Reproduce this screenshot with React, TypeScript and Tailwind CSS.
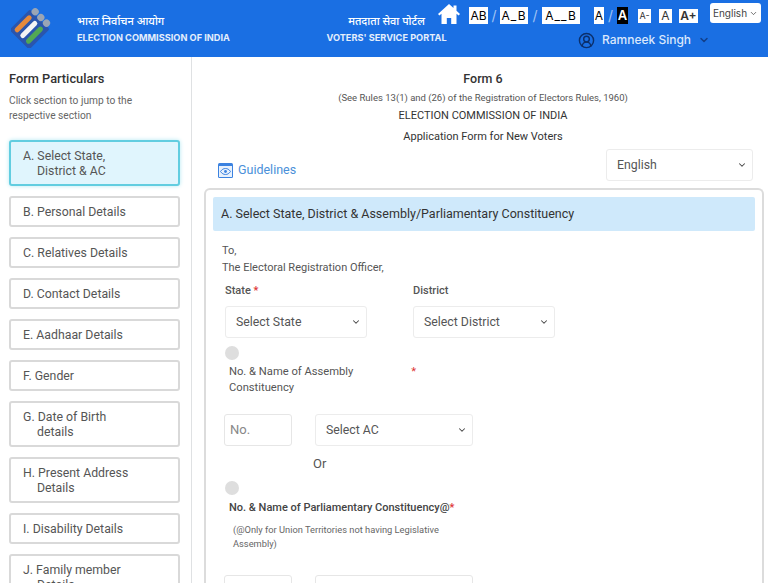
import { ChevronDown, CircleUserRound } from "lucide-react";

const SECTIONS = [
  { id: "A.", lines: ["Select State,", "District & AC"], active: true },
  { id: "B.", lines: ["Personal Details"] },
  { id: "C.", lines: ["Relatives Details"] },
  { id: "D.", lines: ["Contact Details"] },
  { id: "E.", lines: ["Aadhaar Details"] },
  { id: "F.", lines: ["Gender"] },
  { id: "G.", lines: ["Date of Birth", "details"] },
  { id: "H.", lines: ["Present Address", "Details"] },
  { id: "I.", lines: ["Disability Details"] },
  { id: "J.", lines: ["Family member", "Details"] },
];

function Logo() {
  return (
    <svg width="42" height="42" viewBox="0 0 42 42" className="shrink-0">
      <g transform="rotate(-45 21 21)">
        <rect x="3" y="7" width="29" height="28" rx="2" fill="#2a55ad" />
        <rect x="6" y="10" width="22" height="5" rx="2.500" fill="#e58a3c" />
        <rect x="6" y="18" width="22" height="5" rx="2.500" fill="#f4f4f4" />
        <rect x="6" y="26" width="22" height="5" rx="2.500" fill="#52a853" />
        <circle cx="34" cy="12.500" r="3.600" fill="#9aa5b5" />
        <circle cx="34" cy="20.500" r="3.600" fill="#9aa5b5" />
        <circle cx="34" cy="28.500" r="3.600" fill="#9aa5b5" />
      </g>
    </svg>
  );
}

function A11yBox({ label, className = "" }: { label: string; className?: string }) {
  return (
    <span className={`flex h-[17px] items-center justify-center whitespace-nowrap bg-white text-[12px] leading-none text-black ${className}`}>
      {label}
    </span>
  );
}

function Slash({ className = "w-[12px]" }: { className?: string }) {
  return <span className={`text-center text-[14px] leading-none ${className}`}>/</span>;
}

function Header() {
  return (
    <header className="flex h-[57px] shrink-0 bg-[#1a6fe3] font-['Inter',sans-serif] text-white">
      <div className="ml-[11px] mt-[6px]">
        <Logo />
      </div>
      <div className="ml-[24px] mt-[13px] w-[249px]">
        <div className="font-['Noto_Sans',sans-serif] text-[11px] leading-[15px] font-medium">भारत निर्वाचन आयोग</div>
        <div className="mt-[3px] text-[9.200px] leading-[14px] font-bold text-[#e4eefc]">ELECTION COMMISSION OF INDIA</div>
      </div>
      <div className="mt-[13px] w-[121px] text-center">
        <div className="font-['Noto_Sans',sans-serif] text-[11px] leading-[15px] font-medium">मतदाता सेवा पोर्टल</div>
        <div className="mt-[3px] whitespace-nowrap text-[9.200px] leading-[14px] font-bold text-[#e4eefc]">VOTERS' SERVICE PORTAL</div>
      </div>
      <div className="-ml-[9px] flex flex-col">
        <div className="mt-[3px] flex items-start">
          <svg width="22" height="20" viewBox="0 0 22 20" fill="white" className="mt-[1px]">
            <path d="M11 0 0 10l1.400 1.500L3.500 9.700V20h5.300v-6h4.400v6h5.300V9.700l2.100 1.800L22 10l-3.500-3.200V1.500h-3v2.600z" />
          </svg>
          <div className="ml-[9px] mt-[4px] flex items-center text-white/60">
            <A11yBox label="AB" className="w-[19px]" />
            <Slash />
            <A11yBox label="A_B" className="w-[28px] tracking-[1px]" />
            <Slash className="w-[14px]" />
            <A11yBox label="A__B" className="w-[38px] tracking-[1px]" />
            <A11yBox label="A" className="ml-[14px] w-[10px]" />
            <Slash className="w-[13px]" />
            <span className="flex h-[17px] w-[11px] items-center justify-center bg-black text-[13px] leading-none font-semibold text-white">A</span>
            <span className="ml-[10px] flex h-[14px] w-[13px] items-center justify-center bg-white text-[9px] text-[#333]">A-</span>
            <span className="ml-[8px] flex h-[14px] w-[13px] items-center justify-center bg-white text-[12px] text-[#333]">A</span>
            <span className="ml-[7px] flex h-[14px] w-[19px] items-center justify-center bg-white text-[12px] font-semibold text-[#333]">A+</span>
          </div>
          <div className="ml-[12px] flex h-[20px] w-[51px] items-center justify-center gap-[2px] rounded-[3px] bg-white text-[10px] text-[#444]">
            English
            <ChevronDown size={9} strokeWidth={2} />
          </div>
        </div>
        <div className="ml-[140px] mt-[7px] flex items-center">
          <CircleUserRound size={17} strokeWidth={2} className="text-[#0b2f6b]" />
          <span className="ml-[7px] text-[12px] font-medium text-[#dbe8fc]">Ramneek Singh</span>
          <ChevronDown size={12} strokeWidth={3} className="ml-[7px] text-[#123f8a]" />
        </div>
      </div>
    </header>
  );
}

function Sidebar() {
  return (
    <aside className="w-[192px] shrink-0 border-r border-[#dfe1e3] pl-[9px] pr-[11px]">
      <h2 className="mt-[14px] text-[12.800px] leading-[16px] font-medium text-[#333]">Form Particulars</h2>
      <p className="mt-[6px] text-[10.200px] leading-[15px] text-[#666]">
        Click section to jump to the
        <br />
        respective section
      </p>
      <div className="mt-[17px] flex flex-col gap-[10px]">
        {SECTIONS.map((s) => (
          <div
            key={s.id}
            className={`shrink-0 rounded-[3px] border-2 pb-[5px] pl-[12px] pt-[7px] text-[12.300px] leading-[15px] text-[#555] ${
              s.active
                ? "border-[#62cde0] bg-[#e0f5fd] shadow-[0_0_4px_#b5e8f2]"
                : "border-[#d9d9d9] bg-white"
            }`}
          >
            <span className="block">{s.id} {s.lines[0]}</span>
            {s.lines[1] && <span className="block pl-[14px]">{s.lines[1]}</span>}
          </div>
        ))}
      </div>
    </aside>
  );
}

function SelectBox({ label, className = "" }: { label: string; className?: string }) {
  return (
    <div className={`flex h-[32px] items-center justify-between rounded-[3px] border border-[#ececec] bg-white pl-[10px] pr-[5px] text-[12.300px] text-[#555] ${className}`}>
      {label}
      <ChevronDown size={10} strokeWidth={2.500} className="text-[#444]" />
    </div>
  );
}

function Radio() {
  return <div className="h-[14px] w-[14px] rounded-full bg-[#dedede]" />;
}

function FormCard() {
  return (
    <section className="ml-[12px] mr-[4px] mt-[7px] rounded-t-[6px] border-2 border-b-0 border-[#dcdcdc] px-[7px] pt-[7px]">
      <div className="flex h-[34px] items-center rounded-[2px] bg-[#cfe9fb] pl-[8px] text-[12.500px] text-[#333]">
        A. Select State, District &amp; Assembly/Parliamentary Constituency
      </div>
      <div className="pl-[9px]">
        <p className="mt-[12px] text-[11px] leading-[16.500px] text-[#555]">
          To,
          <br />
          The Electoral Registration Officer,
        </p>
        <div className="mt-[8px] flex pl-[3px]">
          <div className="w-[188px]">
            <div className="text-[11px] leading-[14px] font-medium text-[#555]">
              State <span className="text-[#d33]">*</span>
            </div>
            <SelectBox label="Select State" className="mt-[8px] w-[142px]" />
          </div>
          <div>
            <div className="text-[11px] leading-[14px] font-medium text-[#555]">District</div>
            <SelectBox label="Select District" className="mt-[8px] w-[142px]" />
          </div>
        </div>
        <div className="ml-[3px] mt-[8px]">
          <Radio />
        </div>
        <div className="ml-[7px] mt-[4px] flex w-[187px] justify-between text-[11.200px] leading-[16px] text-[#555]">
          <span>
            No. &amp; Name of Assembly
            <br />
            Constituency
          </span>
          <span className="text-[#d33]">*</span>
        </div>
        <div className="ml-[2px] mt-[18px] flex gap-[23px]">
          <div className="flex h-[32px] w-[68px] items-center rounded-[3px] border border-[#e6e6e6] pl-[5px] text-[13px] text-[#888]">No.</div>
          <SelectBox label="Select AC" className="w-[158px]" />
        </div>
        <div className="ml-[91px] mt-[10px] text-[13px] leading-[16px] text-[#555]">Or</div>
        <div className="ml-[3px] mt-[9px]">
          <Radio />
        </div>
        <div className="ml-[7px] mt-[5px] text-[11px] leading-[16px] font-medium text-[#444]">
          No. &amp; Name of Parliamentary Constituency@<span className="text-[#d33]">*</span>
        </div>
        <p className="ml-[11px] mt-[7px] w-[235px] text-[9.300px] leading-[14px] text-[#666]">
          (@Only for Union Territories not having Legislative Assembly)
        </p>
        <div className="ml-[2px] mt-[24px] flex gap-[23px]">
          <div className="h-[32px] w-[68px] rounded-[3px] border border-[#e6e6e6]" />
          <div className="h-[32px] w-[158px] rounded-[3px] border border-[#e6e6e6]" />
        </div>
      </div>
    </section>
  );
}

function Main() {
  return (
    <main className="min-w-0 flex-1">
      <div className="mt-[13px] pl-[6px] text-center text-[#333]">
        <div className="text-[12.500px] leading-[18px] font-medium">Form 6</div>
        <div className="mt-[3px] text-[9.500px] leading-[14px] text-[#555]">(See Rules 13(1) and (26) of the Registration of Electors Rules, 1960)</div>
        <div className="mt-[3px] text-[11px] leading-[16px]">ELECTION COMMISSION OF INDIA</div>
        <div className="mt-[5px] text-[11px] leading-[16px]">Application Form for New Voters</div>
      </div>
      <div className="mt-[4px] flex items-start justify-between pl-[26px] pr-[15px]">
        <div className="mt-[12px] flex items-center gap-[5px] text-[12.500px] text-[#4a90d9]">
          <svg width="15" height="15" viewBox="0 0 15 15">
            <rect width="15" height="15" rx="1.500" fill="#3b82e0" />
            <rect x="1" y="3" width="13" height="11" fill="#e8f1fc" />
            <path d="M2.500 8.500C4 6.300 5.600 5.500 7.500 5.500s3.500.8 5 3c-1.500 2.200-3.100 3-5 3s-3.500-.8-5-3z" fill="none" stroke="#3b82e0" />
            <circle cx="7.500" cy="8.500" r="1.400" fill="#3b82e0" />
          </svg>
          Guidelines
        </div>
        <SelectBox label="English" className="w-[147px]" />
      </div>
      <FormCard />
    </main>
  );
}

export default function App() {
  return (
    <div className="flex h-[583px] flex-col overflow-hidden bg-white font-['Roboto',sans-serif]">
      <Header />
      <div className="flex min-h-0 flex-1">
        <Sidebar />
        <Main />
      </div>
    </div>
  );
}
